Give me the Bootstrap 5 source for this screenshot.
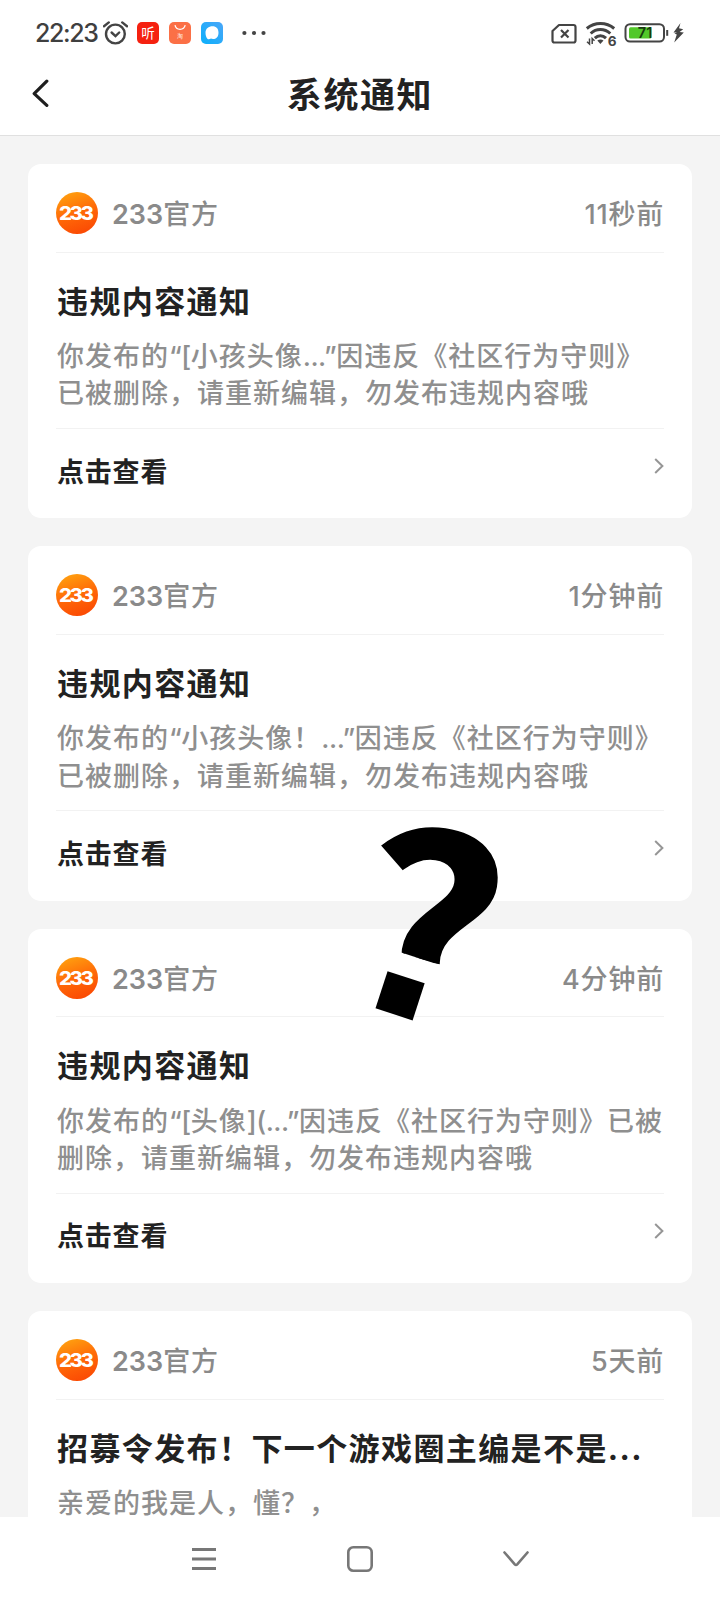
<!DOCTYPE html>
<html lang="zh-CN">
<head>
<meta charset="utf-8">
<meta name="viewport" content="width=device-width, initial-scale=1">
<title>系统通知</title>
<link href="https://cdn.jsdelivr.net/npm/bootstrap@5.3.0/dist/css/bootstrap.min.css" rel="stylesheet">
<style>
  body { font-family: Inter, "Noto Sans CJK SC", sans-serif; color: #222; background: #fff; }
  .screen { width: 720px; height: 1600px; }
  .statusbar { height: 66px; color: #3f3f3f; }
  .clock { font-size: 25px; font-weight: 500; letter-spacing: -1.4px; line-height: 68px; width: 67px; }
  .topbar { height: 70px; border-bottom: 1px solid #e0e0e0; }
  .topbar h1 { font-size: 35px; letter-spacing: 1.6px; line-height: 58px; }
  .feed { background: #f4f4f4; padding: 28px 28px 0; gap: 28px; height: 1381px; }
  .notice { height: 354.4px; border-radius: 13px; padding: 0 28px; --bs-card-border-width: 0; flex: none; }
  .notice-top { height: 88.5px; padding-top: 11px; border-bottom: 1.5px solid #f2f2f2; color: #8a8a8a; font-size: 27px; line-height: 40px; letter-spacing: .8px; font-weight: 500; }
  .notice-top svg { margin-bottom: 1px; }
  .notice-top > span { padding-top: 3px; }
  .sender { margin-left: 14px; }
  .sender .ltr-run { font-weight: 600; }
  .ltr-run { letter-spacing: 0; }
  .notice-text .ltr-run { letter-spacing: -.5px; }
  .notice-body { height: 176.5px; padding: 26px 0 0 1px; border-bottom: 1.5px solid #f2f2f2; }
  .notice-title { font-size: 31px; letter-spacing: 1.4px; line-height: 45px; margin: 0 0 14.5px; }
  .notice-text { font-size: 27px; font-weight: 500; letter-spacing: 1px; line-height: 37.4px; color: #8f8f8f; margin: 0; white-space: nowrap; }
  .view { font-size: 27px; letter-spacing: .8px; line-height: 40px; font-weight: 700; padding: 23.5px 0 0 1px; color: #222; }
  .view svg { margin-top: 5.5px; }
  .navbar-soft { height: 83px; padding: 0 190px; }
  .sticker { left: 355px; top: 814px; width: 160px; height: 220px; overflow: visible; }
</style>
</head>
<body>
<svg width="0" height="0" class="position-absolute">
  <defs>
    <linearGradient id="orange" x1=".15" y1="0" x2=".5" y2="1">
      <stop offset="0" stop-color="#ffa410"/><stop offset=".55" stop-color="#ff6a08"/><stop offset="1" stop-color="#fb4c04"/>
    </linearGradient>
    <linearGradient id="blue" x1="1" y1="0" x2="0" y2="1">
      <stop offset="0" stop-color="#4aa6f8"/><stop offset="1" stop-color="#0bb0fb"/>
    </linearGradient>
    <symbol id="avatar" viewBox="0 0 42 42">
      <circle cx="21" cy="21" r="21" fill="url(#orange)"/>
      <text transform="translate(3 28) scale(1.100 1)" textLength="32.500" font-family="Inter" font-weight="800" font-size="18.500" fill="#fff">233</text>
    </symbol>
    <symbol id="chevron" viewBox="0 0 10 16">
      <path d="M1.2 1 8.4 8 1.2 15" fill="none" stroke="#969696" stroke-width="2"/>
    </symbol>
  </defs>
</svg>
<div class="screen position-relative overflow-hidden d-flex flex-column">
  <div class="statusbar d-flex align-items-center justify-content-between">
    <div class="d-flex align-items-center h-100" style="padding-left:35px">
      <span class="clock">22:23</span>
      <svg width="25" height="24" viewBox="0 0 25 24" fill="none" stroke="#444" stroke-width="2.400" stroke-linecap="round" style="margin-left:1px"><circle cx="12.400" cy="13" r="9.400"/><path d="m8.600 11.500 3.900 3.600 3.700-3.600"/><path d="M1 5.200 5.800 1.400M24 5.200l-4.800-3.800"/></svg>
      <svg width="22" height="22" viewBox="0 0 22 22" style="margin-left:9px"><rect width="22" height="22" rx="5" fill="#f52110"/><text x="4.200" y="16" font-family="Noto Sans CJK SC" font-size="13.500" fill="#fff">听</text></svg>
      <svg width="22" height="22" viewBox="0 0 22 22" style="margin-left:10px"><rect width="22" height="22" rx="5" fill="#fb7046"/><path d="M6 3.200c1 5.500 9 5.500 10.200 0" fill="none" stroke="#fff" stroke-width="1.200"/><text x="8" y="15.500" font-family="Noto Sans CJK SC" font-size="6" fill="#ffe3da">淘</text></svg>
      <svg width="22" height="22" viewBox="0 0 22 22" style="margin-left:10px"><rect width="22" height="22" rx="5" fill="url(#blue)"/><path d="M4.500 10.500c0-4 3.200-6.300 7-6.300s6 2.300 6 6.500c0 4.300-2.500 6.300-5.500 6.300-.8 0-1.500-.2-2-.4-1.500.9-3 .7-3.400.3-1.400-1.300-2.100-3.700-2.100-6.400z" fill="#fff"/></svg>
      <svg width="24" height="6" viewBox="0 0 24 6" fill="#444" style="margin-left:19px"><circle cx="2.400" cy="3" r="2.100"/><circle cx="12" cy="3" r="2.100"/><circle cx="21.500" cy="3" r="2.100"/></svg>
    </div>
    <svg width="140" height="28" viewBox="545 19 140 28" fill="none" stroke="#444" style="margin-right:35px">
      <path d="M559 25h14.500a2 2 0 0 1 2 2v13.500a2 2 0 0 1-2 2h-19a2 2 0 0 1-2-2V31z" stroke-width="2.200" stroke-linejoin="round"/>
      <path d="m561 30 7.500 7.500m0-7.500-7.500 7.500" stroke-width="2.200"/>
      <g stroke-width="3"><path d="M586.800 28.500c8-6.600 19.400-6.600 27.400 0"/><path d="M590.700 33.500c5.500-5.200 13.800-5.200 19.600 0"/><path d="M594.800 38.200c3.400-3.200 7.800-3.200 11.200 0"/></g>
      <path d="M597.300 40.600c2-1.400 4.400-1.400 6.200 0l-3.100 3.400z" fill="#444" stroke="none"/>
      <path d="M589.500 38.500v5.500l-2.500-2.200M592.200 44v-5.500l2.300 2.200" stroke-width="1.500"/>
      <text x="607.700" y="45.500" stroke="#fff" stroke-width="2.500" paint-order="stroke" fill="#444" font-size="13.500" font-weight="700">6</text>
      <rect x="625.500" y="24.200" width="38.500" height="17.300" rx="4.500" stroke-width="2"/>
      <rect x="629" y="27.200" width="22.300" height="11.400" rx="1.500" fill="#52c829" stroke="none"/>
      <text x="637.800" y="38.400" fill="#173b0e" stroke="none" font-size="15" font-weight="600" textLength="14.500" lengthAdjust="spacingAndGlyphs">71</text>
      <path d="M667.200 30v5.800" stroke-width="2"/>
      <path d="m680.500 23-7 9.500h3.500l-2.600.9 2.400 1.200-2.600 7.800 9.600-9.800-4.200-.6 3.600-2.700-4.200-1z" fill="#444" stroke="none"/>
    </svg>
  </div>
  <header class="topbar position-relative d-flex justify-content-center">
    <svg class="position-absolute" style="left:32px;top:13px" width="18" height="29" viewBox="0 0 18 29" fill="none" stroke="#1f1f1f" stroke-width="3.200" stroke-linecap="round" stroke-linejoin="round"><path d="M14.800 2.200 2.200 14.600 14.800 26.400"/></svg>
    <h1 class="m-0 fw-bold">系统通知</h1>
  </header>
  <main class="feed d-flex flex-column overflow-hidden">
    <article class="card notice">
      <div class="notice-top d-flex align-items-center"><svg width="42" height="42"><use href="#avatar"/></svg><span class="sender"><span class="ltr-run">233</span>官方</span><span class="ms-auto">11秒前</span></div>
      <div class="notice-body"><h2 class="notice-title fw-bold">违规内容通知</h2><p class="notice-text">你发布的<span class="ltr-run">“[</span>小孩头像<span class="ltr-run">...”</span>因违反《社区行为守则》<br>已被删除，请重新编辑，勿发布违规内容哦</p></div>
      <div class="view d-flex justify-content-between"><span>点击查看</span><svg width="10" height="16"><use href="#chevron"/></svg></div>
    </article>
    <article class="card notice">
      <div class="notice-top d-flex align-items-center"><svg width="42" height="42"><use href="#avatar"/></svg><span class="sender"><span class="ltr-run">233</span>官方</span><span class="ms-auto">1分钟前</span></div>
      <div class="notice-body"><h2 class="notice-title fw-bold">违规内容通知</h2><p class="notice-text">你发布的<span class="ltr-run">“</span>小孩头像！<span class="ltr-run">...”</span>因违反《社区行为守则》<br>已被删除，请重新编辑，勿发布违规内容哦</p></div>
      <div class="view d-flex justify-content-between"><span>点击查看</span><svg width="10" height="16"><use href="#chevron"/></svg></div>
    </article>
    <article class="card notice">
      <div class="notice-top d-flex align-items-center"><svg width="42" height="42"><use href="#avatar"/></svg><span class="sender"><span class="ltr-run">233</span>官方</span><span class="ms-auto">4分钟前</span></div>
      <div class="notice-body"><h2 class="notice-title fw-bold">违规内容通知</h2><p class="notice-text">你发布的<span class="ltr-run">“[</span>头像<span class="ltr-run">](...”</span>因违反《社区行为守则》已被<br>删除，请重新编辑，勿发布违规内容哦</p></div>
      <div class="view d-flex justify-content-between"><span>点击查看</span><svg width="10" height="16"><use href="#chevron"/></svg></div>
    </article>
    <article class="card notice">
      <div class="notice-top d-flex align-items-center"><svg width="42" height="42"><use href="#avatar"/></svg><span class="sender"><span class="ltr-run">233</span>官方</span><span class="ms-auto">5天前</span></div>
      <div class="notice-body border-0"><h2 class="notice-title fw-bold text-nowrap">招募令发布！下一个游戏圈主编是不是...</h2><p class="notice-text">亲爱的我是人，懂？，</p></div>
    </article>
  </main>
  <nav class="navbar-soft d-flex justify-content-between align-items-center bg-white" aria-label="系统导航">
    <svg width="28" height="28" viewBox="0 0 28 28" stroke="#777" stroke-width="2.800"><path d="M2 4.500h24M2 14h24M2 23.500h24"/></svg>
    <svg width="28" height="28" viewBox="0 0 28 28" fill="none" stroke="#777" stroke-width="2.600"><rect x="2.300" y="2.300" width="23.400" height="23.400" rx="5"/></svg>
    <svg width="28" height="28" viewBox="0 0 28 28" fill="none" stroke="#777" stroke-width="2.600" stroke-linecap="round" stroke-linejoin="round"><path d="M2.500 7.500 12.800 19.400q1.200 1.300 2.400 0L25.500 7.500"/></svg>
  </nav>
  <svg class="sticker position-absolute" viewBox="-70 -110 160 220">
    <defs><clipPath id="hook"><rect x="-90" y="-120" width="180" height="154.500"/></clipPath></defs>
    <g transform="rotate(18)">
      <g clip-path="url(#hook)"><text transform="rotate(-9 0 34) translate(11 100) scale(1.100 1)" text-anchor="middle" font-family="Noto Sans CJK SC" font-weight="700" font-size="253" stroke="#000" stroke-width="3">?</text></g>
      <rect x="-21" y="56.500" width="39" height="39"/>
    </g>
  </svg>
</div>
<script src="https://cdn.jsdelivr.net/npm/bootstrap@5.3.0/dist/js/bootstrap.bundle.min.js"></script>
</body>
</html>
